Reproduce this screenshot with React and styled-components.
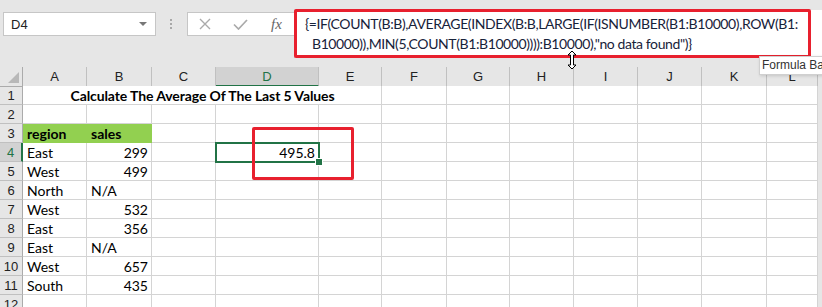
import React from "react";
import styled, { createGlobalStyle } from "styled-components";

const GlobalStyle = createGlobalStyle`
  html, body {
    margin: 0;
    padding: 0;
    background: #e6e6e6;
    height: 307px;
    overflow: hidden;
  }
  body {
    font-family: "Lato", "Liberation Sans", sans-serif;
  }
`;

const COLS = [
  { key: "A", w: 64 },
  { key: "B", w: 65 },
  { key: "C", w: 64 },
  { key: "D", w: 103 },
  { key: "E", w: 63 },
  { key: "F", w: 65 },
  { key: "G", w: 63 },
  { key: "H", w: 64 },
  { key: "I", w: 64 },
  { key: "J", w: 64 },
  { key: "K", w: 65 },
  { key: "L", w: 51 },
];

const rows = [
  { n: 1, title: "Calculate The Average Of The Last 5 Values" },
  { n: 2, cells: {} },
  { n: 3, cells: { A: { v: "region", head: true }, B: { v: "sales", head: true } } },
  { n: 4, cells: { A: { v: "East" }, B: { v: "299", num: true }, D: { v: "495.8", num: true } } },
  { n: 5, cells: { A: { v: "West" }, B: { v: "499", num: true } } },
  { n: 6, cells: { A: { v: "North" }, B: { v: "N/A" } } },
  { n: 7, cells: { A: { v: "West" }, B: { v: "532", num: true } } },
  { n: 8, cells: { A: { v: "East" }, B: { v: "356", num: true } } },
  { n: 9, cells: { A: { v: "East" }, B: { v: "N/A" } } },
  { n: 10, cells: { A: { v: "West" }, B: { v: "657", num: true } } },
  { n: 11, cells: { A: { v: "South" }, B: { v: "435", num: true } } },
  { n: 12, cells: {} },
];

const Page = styled.div`
  width: 822px;
  height: 307px;
  position: relative;
  overflow: hidden;
`;

const TopBar = styled.div`
  height: 67px;
  display: flex;
  align-items: flex-start;
  box-sizing: border-box;
`;

const NameBox = styled.div`
  margin: 12px 0 0 3px;
  width: 153px;
  height: 24px;
  box-sizing: border-box;
  background: #fff;
  border: 1px solid #c6c6c6;
  display: flex;
  align-items: center;
  justify-content: space-between;
  padding: 0 8px 0 7px;
  font-family: "Liberation Sans", sans-serif;
  font-size: 13px;
  color: #222;
`;

const Caret = styled.span`
  width: 0;
  height: 0;
  border-left: 4px solid transparent;
  border-right: 4px solid transparent;
  border-top: 4px solid #777;
`;

const Dots = styled.div`
  margin: 19px 0 0 14px;
  width: 2px;
  display: flex;
  flex-direction: column;
  gap: 2px;
  span {
    width: 2px;
    height: 2px;
    background: #a8a8a8;
  }
`;

const FxBox = styled.div`
  margin: 12px 0 0 15px;
  width: 107px;
  height: 24px;
  box-sizing: border-box;
  background: #fff;
  border: 1px solid #c6c6c6;
  border-right: none;
  display: flex;
  align-items: center;
  gap: 22px;
  padding: 0 0 0 11px;
`;

const FxLabel = styled.span`
  font-family: "Liberation Serif", serif;
  font-style: italic;
  font-size: 15px;
  color: #666;
  margin-left: 1px;
`;

const FormulaArea = styled.div`
  flex: 1;
  margin-top: 10px;
  height: 48px;
  background: #fff;
  border-left: 1px solid #c6c6c6;
  position: relative;
`;

const Annotation = styled.div`
  position: absolute;
  border: 3px solid #e8202e;
  border-radius: 2px;
  box-sizing: border-box;
`;

const FormulaText = styled.div`
  padding: 4px 0 0 10px;
  font-family: "Lato", "Liberation Sans", sans-serif;
  font-size: 14px;
  letter-spacing: -0.4px;
  line-height: 20px;
  color: #17223a;
  white-space: nowrap;
  div + div {
    padding-left: 7px;
  }
`;

const Sheet = styled.div`
  display: grid;
  grid-template-columns: 23px ${COLS.map((c) => c.w + "px").join(" ")};
  grid-auto-rows: 19px;
  width: 818px;
  background: #fff;
  position: relative;
`;

const Corner = styled.div`
  height: 20px;
  background: #e6e6e6;
  border-right: 1px solid #ababab;
  border-bottom: 1px solid #ababab;
  box-sizing: border-box;
  position: relative;
  &::after {
    content: "";
    position: absolute;
    right: 3px;
    bottom: 3px;
    border-left: 11px solid transparent;
    border-bottom: 11px solid #b8b8b8;
  }
`;

const ColHead = styled.div`
  height: 20px;
  box-sizing: border-box;
  background: ${(p) => (p.$active ? "#d2d2d2" : "#e6e6e6")};
  border-right: 1px solid #c0c0c0;
  border-bottom: ${(p) => (p.$active ? "2px solid #217346" : "1px solid #ababab")};
  display: flex;
  align-items: center;
  justify-content: center;
  font-family: "Liberation Sans", sans-serif;
  font-size: 13px;
  color: ${(p) => (p.$active ? "#217346" : "#222")};
  padding-top: ${(p) => (p.$active ? "1px" : "0")};
  &:last-child {
    border-right: 1px solid #ababab;
  }
`;

const RowHead = styled.div`
  box-sizing: border-box;
  background: ${(p) => (p.$active ? "#d2d2d2" : "#e6e6e6")};
  border-right: ${(p) => (p.$active ? "2px solid #217346" : "1px solid #ababab")};
  border-bottom: 1px solid #c0c0c0;
  display: flex;
  align-items: center;
  justify-content: center;
  font-family: "Liberation Sans", sans-serif;
  font-size: 13px;
  color: ${(p) => (p.$active ? "#217346" : "#222")};
`;

const Cell = styled.div`
  box-sizing: border-box;
  border-right: 1px solid ${(p) => (p.$fill ? "#92d050" : "#d4d4d4")};
  border-bottom: 1px solid ${(p) => (p.$fill ? "#92d050" : "#d4d4d4")};
  background: ${(p) => (p.$fill ? "#92d050" : "#fff")};
  grid-column: ${(p) => (p.$span ? `span ${p.$span}` : "auto")};
  display: flex;
  align-items: center;
  justify-content: ${(p) => (p.$center ? "center" : p.$num ? "flex-end" : "flex-start")};
  padding: 0 3px 0 4px;
  font-size: 14px;
  letter-spacing: ${(p) => (p.$center ? "-0.1px" : "0")};
  font-weight: ${(p) => (p.$bold ? 700 : 400)};
  color: #000;
  white-space: nowrap;
  overflow: hidden;
  &:last-child {
    border-right-color: #ababab;
  }
`;

const Selection = styled.div`
  position: absolute;
  left: 215px;
  top: 75px;
  width: 105px;
  height: 21px;
  border: 2px solid #217346;
  box-sizing: border-box;
  &::after {
    content: "";
    position: absolute;
    right: -5px;
    bottom: -5px;
    width: 6px;
    height: 6px;
    background: #217346;
    border: 1px solid #fff;
  }
`;

const Tooltip = styled.div`
  position: absolute;
  left: 759px;
  top: 56px;
  height: 17px;
  padding: 0 2px;
  background: #fff;
  border: 1px solid #d0d0d0;
  box-shadow: 1px 1px 3px rgba(0, 0, 0, 0.15);
  font-family: "Liberation Sans", sans-serif;
  font-size: 12px;
  line-height: 17px;
  color: #333;
  white-space: nowrap;
`;

const Cursor = styled.svg`
  position: absolute;
  left: 566px;
  top: 50px;
`;

function XIcon() {
  return (
    <svg width="12" height="12" viewBox="0 0 12 12">
      <path d="M1 1 L11 11 M11 1 L1 11" stroke="#aaa" strokeWidth="1.4" fill="none" />
    </svg>
  );
}

function CheckIcon() {
  return (
    <svg width="15" height="11" viewBox="0 0 15 11">
      <path d="M1 5.5 L5.5 10 L14 1" stroke="#aaa" strokeWidth="1.7" fill="none" />
    </svg>
  );
}

export default function App() {
  return (
    <Page>
      <GlobalStyle />
      <TopBar>
        <NameBox>
          D4
          <Caret />
        </NameBox>
        <Dots>
          <span />
          <span />
          <span />
        </Dots>
        <FxBox>
          <XIcon />
          <CheckIcon />
          <FxLabel>fx</FxLabel>
        </FxBox>
        <FormulaArea>
          <FormulaText>
            <div>{"{=IF(COUNT(B:B),AVERAGE(INDEX(B:B,LARGE(IF(ISNUMBER(B1:B10000),ROW(B1:"}</div>
            <div>{'B10000)),MIN(5,COUNT(B1:B10000)))):B10000),"no data found")}'}</div>
          </FormulaText>
          <Annotation style={{ left: -1, top: -1, width: 517, height: 49 }} />
        </FormulaArea>
      </TopBar>

      <Sheet>
        <Corner />
        {COLS.map((c) => (
          <ColHead key={c.key} $active={c.key === "D"}>
            {c.key}
          </ColHead>
        ))}
        {rows.map((r) => (
          <React.Fragment key={r.n}>
            <RowHead $active={r.n === 4}>{r.n}</RowHead>
            {r.title ? (
              <>
                <Cell $span={5} $center $bold>
                  {r.title}
                </Cell>
                {COLS.slice(5).map((c) => (
                  <Cell key={c.key} />
                ))}
              </>
            ) : (
              COLS.map((c) => {
                const cell = r.cells[c.key];
                return (
                  <Cell
                    key={c.key}
                    $num={cell && cell.num}
                    $bold={cell && cell.head}
                    $fill={cell && cell.head}
                  >
                    {cell ? cell.v : ""}
                  </Cell>
                );
              })
            )}
          </React.Fragment>
        ))}
        <Selection />
        <Annotation style={{ left: 252, top: 60, width: 102, height: 53 }} />
      </Sheet>

      <Cursor width="12" height="20" viewBox="0 0 12 20">
        <path
          d="M6 1 L10 5 L7.5 5 L7.5 15 L10 15 L6 19 L2 15 L4.5 15 L4.5 5 L2 5 Z"
          fill="#fff"
          stroke="#000"
          strokeWidth="1"
        />
      </Cursor>
      <Tooltip>Formula Bar</Tooltip>
    </Page>
  );
}
